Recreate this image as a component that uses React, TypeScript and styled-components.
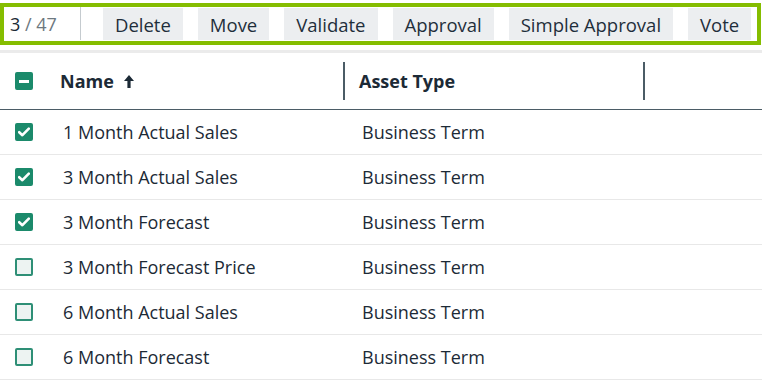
import React from "react"
import styled, { createGlobalStyle } from "styled-components"

const GlobalStyle = createGlobalStyle`
  html, body {
    margin: 0;
    padding: 0;
    background: #ffffff;
  }
  body {
    font-family: "Open Sans", "Noto Sans", sans-serif;
    color: #1c2a36;
  }
`

const actions = ["Delete", "Move", "Validate", "Approval", "Simple Approval", "Vote"]

const rows = [
  { name: "1 Month Actual Sales", type: "Business Term", checked: true },
  { name: "3 Month Actual Sales", type: "Business Term", checked: true },
  { name: "3 Month Forecast", type: "Business Term", checked: true },
  { name: "3 Month Forecast Price", type: "Business Term", checked: false },
  { name: "6 Month Actual Sales", type: "Business Term", checked: false },
  { name: "6 Month Forecast", type: "Business Term", checked: false },
]

const CheckMark = () => (
  <svg width="12" height="10" viewBox="0 0 12 10">
    <path d="M1.2 5.2 L4.4 8.2 L10.8 1.6" fill="none" stroke="#fff" strokeWidth="2.6" strokeLinecap="round" strokeLinejoin="round" />
  </svg>
)

const SortArrow = () => (
  <svg width="10" height="13" viewBox="0 0 10 13">
    <path d="M5 0 L10 6 L6.6 6 L6.6 13 L3.4 13 L3.4 6 L0 6 Z" fill="#1c2a36" />
  </svg>
)

const Checkbox = ({ state }: { state: "checked" | "unchecked" | "mixed" }) => (
  <Box $state={state}>
    {state === "checked" && <CheckMark />}
    {state === "mixed" && <Dash />}
  </Box>
)

export default function App() {
  const selected = rows.filter(r => r.checked).length
  return (
    <Page>
      <GlobalStyle />
      <Toolbar>
        <Counter>
          <strong>{selected}</strong> / 47
        </Counter>
        <Divider />
        <Actions>
          {actions.map(a => (
            <ActionButton key={a}>{a}</ActionButton>
          ))}
        </Actions>
      </Toolbar>
      <Separator />
      <Table>
        <HeaderRow>
          <CheckCell>
            <Checkbox state="mixed" />
          </CheckCell>
          <HeaderCell>
            <HeaderLabel>
              Name <SortArrow />
            </HeaderLabel>
            <Resizer />
          </HeaderCell>
          <HeaderCell $inset>
            <HeaderLabel>Asset Type</HeaderLabel>
            <Resizer />
          </HeaderCell>
          <div />
        </HeaderRow>
        {rows.map(r => (
          <Row key={r.name}>
            <CheckCell>
              <Checkbox state={r.checked ? "checked" : "unchecked"} />
            </CheckCell>
            <Cell>{r.name}</Cell>
            <Cell $inset>{r.type}</Cell>
            <div />
          </Row>
        ))}
      </Table>
    </Page>
  )
}

const Page = styled.div`
  width: 762px;
  padding-top: 3px;
`
const Toolbar = styled.div`
  display: flex;
  align-items: center;
  height: 34px;
  border: 4px solid #85bd00;
  margin-right: 1px;
  background: #fff;
`
const Counter = styled.div`
  width: 70px;
  padding-left: 6px;
  font-size: 18px;
  color: #6d7880;
  strong {
    font-weight: 400;
    color: #1c2a36;
  }
`
const Divider = styled.div`
  width: 1px;
  align-self: stretch;
  margin: 0 0 1px;
  background: #c5cbcf;
`
const Actions = styled.div`
  display: flex;
  gap: 15px;
  margin-left: 22px;
  height: 32px;
`
const ActionButton = styled.button`
  border: none;
  background: #eceef0;
  color: #1f2e3b;
  font-family: inherit;
  font-size: 18.5px;
  padding: 0 12px;
  height: 32px;
  cursor: pointer;
`
const Separator = styled.div`
  height: 3px;
  margin-top: 5px;
  background: #ebebeb;
`
const Table = styled.div`
  display: flex;
  flex-direction: column;
`
const gridColumns = "44px 301px 300px 1fr"
const HeaderRow = styled.div`
  display: grid;
  grid-template-columns: ${gridColumns};
  height: 56px;
  border-bottom: 1px solid #4b5c66;
  align-items: center;
`
const Row = styled.div`
  display: grid;
  grid-template-columns: ${gridColumns};
  height: 44px;
  border-bottom: 1px solid #e8e8e8;
  align-items: center;
  font-size: 18px;
`
const CheckCell = styled.div`
  display: flex;
  padding-left: 15px;
`
const HeaderCell = styled.div<{ $inset?: boolean }>`
  display: flex;
  align-items: center;
  justify-content: space-between;
  height: 100%;
  padding-left: ${p => (p.$inset ? "14px" : "16px")};
`
const HeaderLabel = styled.div`
  display: flex;
  align-items: center;
  gap: 10px;
  font-size: 18px;
  font-weight: 700;
`
const Resizer = styled.div`
  width: 2px;
  height: 38px;
  background: #4b5c66;
`
const Cell = styled.div<{ $inset?: boolean }>`
  padding-left: ${p => (p.$inset ? "17px" : "19px")};
  white-space: nowrap;
`
const Box = styled.div<{ $state: "checked" | "unchecked" | "mixed" }>`
  box-sizing: border-box;
  width: 18px;
  height: 18px;
  border-radius: 2px;
  display: flex;
  align-items: center;
  justify-content: center;
  background: ${p => (p.$state === "unchecked" ? "#edf3f2" : "#1b8a6b")};
  border: 2px solid ${p => (p.$state === "unchecked" ? "#2e8f76" : "#1b8a6b")};
`
const Dash = styled.div`
  width: 10px;
  height: 3px;
  background: #fff;
`
